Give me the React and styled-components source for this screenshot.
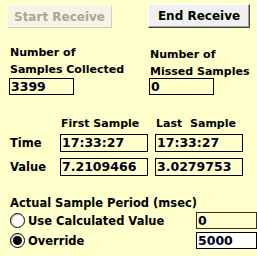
import styled, { createGlobalStyle } from 'styled-components';

const GlobalStyle = createGlobalStyle`
  html, body {
    margin: 0;
    padding: 0;
    background: #ffffcc;
  }
  body {
    font-family: "DejaVu Sans", Verdana, sans-serif;
    font-weight: bold;
    font-size: 11px;
    color: #000;
  }
`;

const Page = styled.div`
  width: 257px;
  height: 256px;
  display: flex;
  flex-direction: column;
  overflow: hidden;
`;

const ButtonRow = styled.div`
  display: flex;
  align-items: flex-start;
  padding: 4px 0 0 7px;
`;

const Button = styled.button`
  box-sizing: border-box;
  font: inherit;
  font-size: 12px;
  height: ${(p) => (p.disabled ? '23px' : '24px')};
  width: ${(p) => (p.disabled ? '105px' : '102px')};
  margin-top: ${(p) => (p.disabled ? '1px' : '0')};
  margin-left: ${(p) => p.$offset || 0}px;
  padding: 0;
  background: ${(p) => (p.disabled ? '#f4f4e6' : '#f0f0f0')};
  color: ${(p) => (p.disabled ? '#a9a890' : '#000')};
  border: 1px solid;
  border-color: ${(p) =>
    p.disabled
      ? '#fbfbf0 #d0cfb8 #d0cfb8 #fbfbf0'
      : '#ffffff #404040 #404040 #ffffff'};
  box-shadow: ${(p) => (p.disabled ? 'none' : 'inset -1px -1px 0 #a0a0a0')};
`;

const Counters = styled.div`
  display: grid;
  grid-template-columns: 140px 1fr;
  padding: 16px 0 0 9px;
`;

const Field = styled.div`
  display: flex;
  flex-direction: column;
`;

const Label = styled.div`
  line-height: 17px;
  padding-left: 1px;
  padding-top: ${(p) => p.$shift || 0}px;
  margin-bottom: ${(p) => (p.$shift ? -p.$shift : 0)}px;
`;

const Box = styled.div`
  box-sizing: border-box;
  width: ${(p) => p.$w}px;
  height: ${(p) => p.$h || 17}px;
  border: 1px solid ${(p) => p.$border || '#000'};
  background: ${(p) => p.$bg || 'transparent'};
  color: #000018;
  line-height: ${(p) => (p.$h || 17) - 2}px;
  padding-left: 1px;
  font-size: 12.5px;
  white-space: nowrap;
  overflow: hidden;
`;

const SampleGrid = styled.div`
  display: grid;
  grid-template-columns: 43px 88px 88px;
  column-gap: 7px;
  row-gap: 6px;
  align-items: center;
  padding: 20px 0 0 10px;
`;

const ColHead = styled.div`
  line-height: 17px;
  padding-left: 1px;
  margin-bottom: -4px;
  word-spacing: ${(p) => p.$ws || 0}px;
`;

const RowHead = styled.div`
  font-size: 11.5px;
`;

const Period = styled.div`
  display: flex;
  flex-direction: column;
  padding: 19px 0 0 10px;
`;

const Title = styled.div`
  font-size: 11.5px;
  line-height: 17px;
`;

const OptionRow = styled.div`
  display: flex;
  align-items: center;
  height: 17px;
  margin-bottom: 3px;
`;

const Radio = styled.span`
  box-sizing: border-box;
  width: 15px;
  height: 15px;
  border-radius: 50%;
  border: 1px solid #000;
  background: #fff;
  display: flex;
  align-items: center;
  justify-content: center;
  margin-right: 3px;
  box-shadow: inset 1px 1px 0 #c8c8c8;

  &::after {
    content: '';
    width: 9px;
    height: 9px;
    border-radius: 50%;
    background: ${(p) => (p.$checked ? '#000' : 'transparent')};
  }
`;

const OptionText = styled.span`
  flex: 1;
  font-size: 11.5px;
`;

const App = () => {
  return (
    <Page>
      <GlobalStyle />
      <ButtonRow>
        <Button disabled>Start Receive</Button>
        <Button $offset={36}>End Receive</Button>
      </ButtonRow>

      <Counters>
        <Field>
          <Label>
            Number of
            <br />
            Samples Collected
          </Label>
          <Box $w={65}>3399</Box>
        </Field>
        <Field>
          <Label $shift={2}>
            Number of
            <br />
            Missed Samples
          </Label>
          <Box $w={65}>0</Box>
        </Field>
      </Counters>

      <SampleGrid>
        <span />
        <ColHead>First Sample</ColHead>
        <ColHead $ws={4}>Last Sample</ColHead>
        <RowHead>Time</RowHead>
        <Box $w={88} $h={18}>17:33:27</Box>
        <Box $w={88} $h={18}>17:33:27</Box>
        <RowHead>Value</RowHead>
        <Box $w={88} $h={18}>7.2109466</Box>
        <Box $w={88} $h={18}>3.0279753</Box>
      </SampleGrid>

      <Period>
        <Title>Actual Sample Period (msec)</Title>
        <OptionRow>
          <Radio />
          <OptionText>Use Calculated Value</OptionText>
          <Box $w={61} $h={17} $border="#303030">0</Box>
        </OptionRow>
        <OptionRow>
          <Radio $checked />
          <OptionText>Override</OptionText>
          <Box $w={61} $h={17} $bg="#ffffff">5000</Box>
        </OptionRow>
      </Period>
    </Page>
  );
};

export default App;
